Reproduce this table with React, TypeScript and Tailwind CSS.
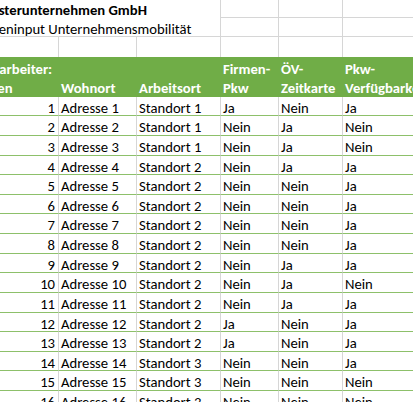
import React from "react";

type Row = [string, string, string, string, string, string];

const rows: Row[] = [
  ["1", "Adresse 1", "Standort 1", "Ja", "Nein", "Ja"],
  ["2", "Adresse 2", "Standort 1", "Nein", "Ja", "Nein"],
  ["3", "Adresse 3", "Standort 1", "Nein", "Ja", "Nein"],
  ["4", "Adresse 4", "Standort 2", "Nein", "Ja", "Ja"],
  ["5", "Adresse 5", "Standort 2", "Nein", "Nein", "Ja"],
  ["6", "Adresse 6", "Standort 2", "Nein", "Nein", "Ja"],
  ["7", "Adresse 7", "Standort 2", "Nein", "Nein", "Ja"],
  ["8", "Adresse 8", "Standort 2", "Nein", "Nein", "Ja"],
  ["9", "Adresse 9", "Standort 2", "Nein", "Ja", "Ja"],
  ["10", "Adresse 10", "Standort 2", "Nein", "Ja", "Nein"],
  ["11", "Adresse 11", "Standort 2", "Nein", "Ja", "Ja"],
  ["12", "Adresse 12", "Standort 2", "Ja", "Nein", "Ja"],
  ["13", "Adresse 13", "Standort 2", "Ja", "Nein", "Ja"],
  ["14", "Adresse 14", "Standort 3", "Nein", "Nein", "Ja"],
  ["15", "Adresse 15", "Standort 3", "Nein", "Nein", "Nein"],
  ["16", "Adresse 16", "Standort 3", "Nein", "Nein", "Nein"],
];

const W = ["w-[83px]", "w-[78px]", "w-[84px]", "w-[58px]", "w-[64px]", "w-[140px]"];

const gridCell =
  "shrink-0 flex items-end leading-none whitespace-nowrap overflow-hidden border-r border-r-[#d6d6d6]";

export default function App() {
  return (
    <div className="w-[413px] h-[402px] overflow-hidden bg-white text-black text-[14.67px] font-['Carlito','Calibri','Liberation_Sans',sans-serif]">
      <div className="-ml-[24px] -mt-[1.9px] flex flex-col w-[507px]">
        {/* Row 1: title */}
        <div className="flex h-[19.64px] shrink-0">
          <div className="w-[245px] shrink-0 flex items-end leading-none whitespace-nowrap pl-[2px] font-bold border-r border-r-[#d6d6d6]">
            Musterunternehmen GmbH
          </div>
          <div className={`${gridCell} ${W[3]} border-b border-b-[#d6d6d6]`} />
          <div className={`${gridCell} ${W[4]} border-b border-b-[#d6d6d6]`} />
          <div className={`${gridCell} ${W[5]} border-b border-b-[#d6d6d6]`} />
        </div>
        {/* Row 2: subtitle */}
        <div className="flex h-[19.64px] shrink-0">
          <div className="w-[245px] shrink-0 flex items-end leading-none whitespace-nowrap pl-[2px] border-r border-r-[#d6d6d6] border-b border-b-[#d6d6d6]">
            Dateninput Unternehmensmobilität
          </div>
          <div className={`${gridCell} ${W[3]} border-b border-b-[#d6d6d6]`} />
          <div className={`${gridCell} ${W[4]} border-b border-b-[#d6d6d6]`} />
          <div className={`${gridCell} ${W[5]} border-b border-b-[#d6d6d6]`} />
        </div>
        {/* Row 3: empty */}
        <div className="flex h-[19.64px] shrink-0">
          {W.map((w, i) => (
            <div key={i} className={`${gridCell} ${w}`} />
          ))}
        </div>
        {/* Header */}
        <div className="flex h-[39.7px] shrink-0 bg-[#70ad47] text-white font-bold leading-[19.5px]">
          <div className={`${W[0]} shrink-0 pt-[3px] pl-[2px] whitespace-nowrap`}>
            <div>Mitarbeiter:</div>
            <div>innen</div>
          </div>
          <div className={`${W[1]} shrink-0 pt-[3px] pl-[2px] whitespace-nowrap`}>
            <div>&nbsp;</div>
            <div>Wohnort</div>
          </div>
          <div className={`${W[2]} shrink-0 pt-[3px] pl-[2px] whitespace-nowrap`}>
            <div>&nbsp;</div>
            <div>Arbeitsort</div>
          </div>
          <div className={`${W[3]} shrink-0 pt-[3px] pl-[2px] whitespace-nowrap`}>
            <div>Firmen-</div>
            <div>Pkw</div>
          </div>
          <div className={`${W[4]} shrink-0 pt-[3px] pl-[2px] whitespace-nowrap`}>
            <div>ÖV-</div>
            <div>Zeitkarte</div>
          </div>
          <div className={`${W[5]} shrink-0 pt-[3px] pl-[2px] whitespace-nowrap`}>
            <div>Pkw-</div>
            <div>Verfügbarkeit</div>
          </div>
        </div>
        {/* Data rows */}
        {rows.map((r) => (
          <div key={r[0]} className="flex h-[19.64px] shrink-0">
            {r.map((v, i) => (
              <div
                key={i}
                className={`${gridCell} ${W[i]} border-b border-b-[#8dc06a] ${
                  i === 0 ? "justify-end pr-[3px]" : "pl-[2px]"
                }`}
              >
                {v}
              </div>
            ))}
          </div>
        ))}
      </div>
    </div>
  );
}
